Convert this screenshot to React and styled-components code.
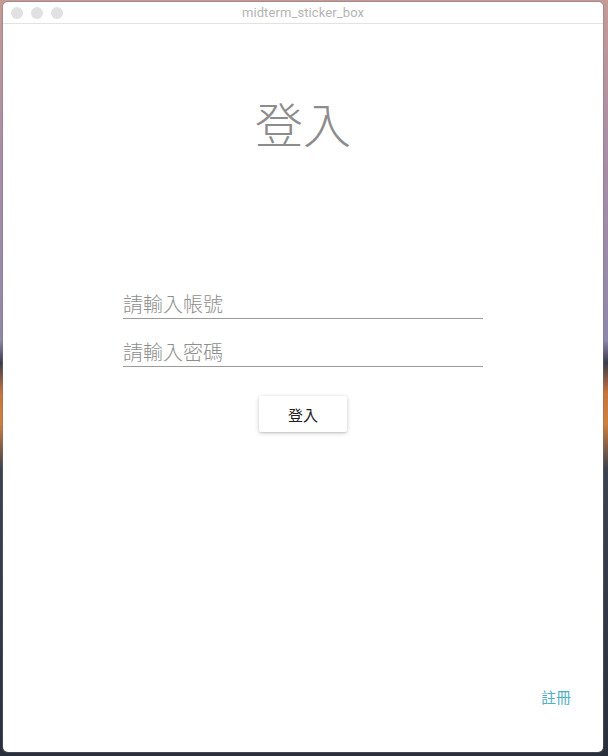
import React from "react";
import styled, { createGlobalStyle } from "styled-components";

const GlobalStyle = createGlobalStyle`
  html, body {
    margin: 0;
    padding: 0;
  }
  body {
    width: 608px;
    height: 756px;
    overflow: hidden;
    font-family: "Noto Sans CJK TC", "Noto Sans", sans-serif;
    background: linear-gradient(
      180deg,
      #c49a96 0%,
      #a98ea6 20%,
      #8f88aa 45%,
      #3a3d4c 48%,
      #c8743c 52%,
      #d0803e 56%,
      #3c4250 62%,
      #2a2f3c 100%
    );
  }
`;

const Desktop = styled.div`
  width: 608px;
  height: 756px;
  padding: 2px 5px 4px 3px;
  box-sizing: border-box;
`;

const Window = styled.div`
  width: 600px;
  height: 750px;
  background: #ffffff;
  border-radius: 5px;
  overflow: hidden;
  display: flex;
  flex-direction: column;
  box-shadow: 0 0 0 1px rgba(120, 110, 120, 0.35);
`;

const TitleBar = styled.div`
  height: 21px;
  display: flex;
  align-items: center;
  justify-content: center;
  position: relative;
  background: #ffffff;
  border-bottom: 1px solid #e2e2e2;
`;

const Lights = styled.div`
  position: absolute;
  left: 8px;
  top: 5px;
  display: flex;
  gap: 8px;
`;

const Light = styled.span`
  width: 12px;
  height: 12px;
  border-radius: 50%;
  background: #e1e1e1;
`;

const WindowTitle = styled.span`
  font-family: "Roboto", "Liberation Sans", sans-serif;
  font-size: 13px;
  color: #b4b4b4;
  letter-spacing: 0.1px;
`;

const Content = styled.div`
  flex: 1;
  display: flex;
  flex-direction: column;
  align-items: center;
  position: relative;
`;

const Heading = styled.h1`
  margin: 68px 0 0;
  font-size: 48px;
  line-height: 60px;
  font-weight: 300;
  color: #8c8c8c;
  letter-spacing: 0;
`;

const Form = styled.div`
  margin-top: 137px;
  width: 360px;
  display: flex;
  flex-direction: column;
  gap: 18px;
`;

const Field = styled.input`
  width: 100%;
  height: 30px;
  box-sizing: border-box;
  border: none;
  border-bottom: 1px solid #9a9a9a;
  outline: none;
  padding: 0 0 1px;
  font-family: "Noto Sans CJK TC", sans-serif;
  font-size: 20px;
  background: transparent;
  color: #555;
  &::placeholder {
    color: #8e8e8e;
    font-weight: 300;
  }
`;

const Button = styled.button`
  margin-top: 29px;
  width: 88px;
  height: 36px;
  border: none;
  border-radius: 2px;
  background: #ffffff;
  box-shadow: 0 1px 4px rgba(0, 0, 0, 0.22), 0 1px 1px rgba(0, 0, 0, 0.08);
  font-family: "Noto Sans CJK TC", sans-serif;
  font-size: 15px;
  color: #222;
  cursor: pointer;
`;

const RegisterLink = styled.a`
  position: absolute;
  right: 32px;
  bottom: 45px;
  font-size: 15px;
  color: #4fb0c0;
  text-decoration: none;
  cursor: pointer;
`;

export default function App() {
  return (
    <>
      <GlobalStyle />
      <Desktop>
        <Window>
          <TitleBar>
            <Lights>
              <Light />
              <Light />
              <Light />
            </Lights>
            <WindowTitle>midterm_sticker_box</WindowTitle>
          </TitleBar>
          <Content>
            <Heading>登入</Heading>
            <Form>
              <Field placeholder="請輸入帳號" />
              <Field type="password" placeholder="請輸入密碼" />
            </Form>
            <Button>登入</Button>
            <RegisterLink>註冊</RegisterLink>
          </Content>
        </Window>
      </Desktop>
    </>
  );
}
